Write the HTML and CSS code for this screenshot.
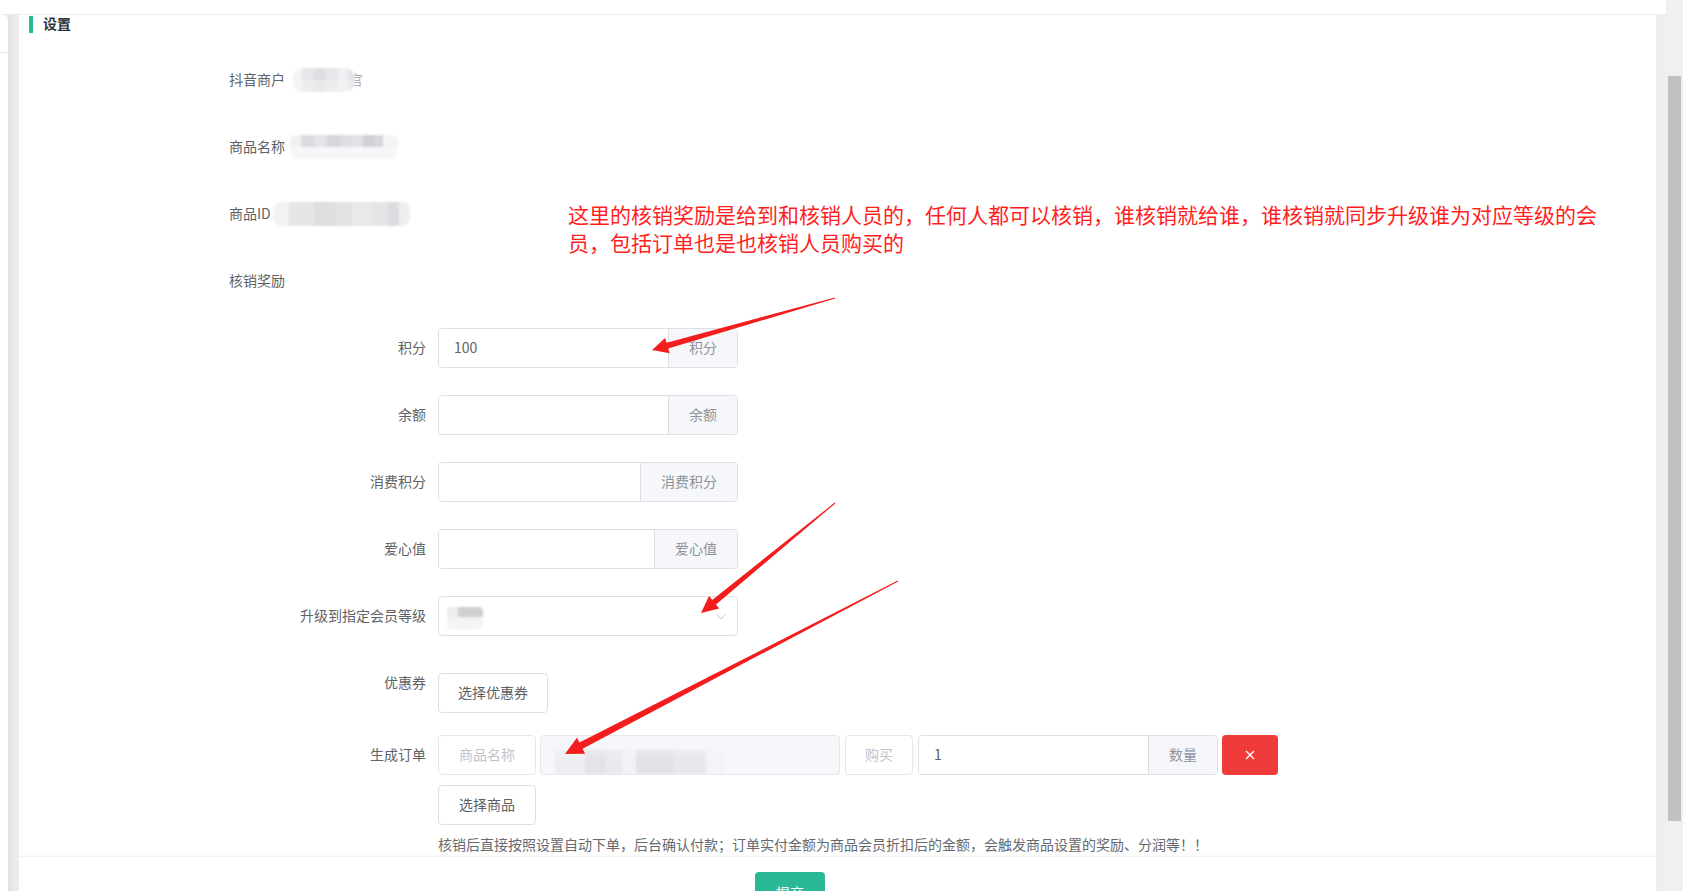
FILE: index.html
```html
<!DOCTYPE html>
<html lang="zh-CN">
<head>
<meta charset="utf-8">
<title>设置</title>
<link rel="stylesheet" href="styles.css">
</head>
<body>
<div class="app">
  <div class="main">
    <div class="topbar"></div>
    <div class="body-row">
      <div class="side"><div class="side-tab"></div></div>
      <div class="side-shadow"></div>
      <div class="panel">
        <div class="panel-head">
          <span class="head-bar"></span>
          <span class="head-title">设置</span>
        </div>
        <div class="form">
          <div class="info-row">
            <span class="info-label">抖音商户</span>
            <span class="blur blur-merchant"></span><span class="info-tail">官</span>
          </div>
          <div class="info-row">
            <span class="info-label">商品名称</span>
            <span class="blur blur-name"></span>
          </div>
          <div class="info-row">
            <span class="info-label">商品ID</span>
            <span class="blur blur-id"></span>
          </div>
          <div class="info-row">
            <span class="info-label">核销奖励</span>
          </div>

          <div class="field">
            <div class="field-label">积分</div>
            <div class="ig">
              <div class="ig-input">100</div>
              <div class="ig-append">积分</div>
            </div>
          </div>
          <div class="field">
            <div class="field-label">余额</div>
            <div class="ig">
              <div class="ig-input"></div>
              <div class="ig-append">余额</div>
            </div>
          </div>
          <div class="field">
            <div class="field-label">消费积分</div>
            <div class="ig">
              <div class="ig-input"></div>
              <div class="ig-append">消费积分</div>
            </div>
          </div>
          <div class="field">
            <div class="field-label">爱心值</div>
            <div class="ig">
              <div class="ig-input"></div>
              <div class="ig-append">爱心值</div>
            </div>
          </div>
          <div class="field">
            <div class="field-label">升级到指定会员等级</div>
            <div class="select">
              <span class="blur blur-level"></span>
              <svg class="chevron" width="10" height="6" viewBox="0 0 10 6"><path d="M0.5 0.5 L5 5 L9.5 0.5" fill="none" stroke="#c0c4cc" stroke-width="1"/></svg>
            </div>
          </div>
          <div class="field field-coupon">
            <div class="field-label">优惠券</div>
            <div class="field-content">
              <div class="btn">选择优惠券</div>
            </div>
          </div>
          <div class="field field-order">
            <div class="field-label">生成订单</div>
            <div class="order-content">
              <div class="order-line">
                <div class="tag-box tag-name">商品名称</div>
                <div class="disabled-box"><span class="blur blur-goods"></span></div>
                <div class="tag-box tag-buy">购买</div>
                <div class="ig ig-qty">
                  <div class="ig-input">1</div>
                  <div class="ig-append">数量</div>
                </div>
                <div class="btn-danger">
                  <svg width="10" height="10" viewBox="0 0 10 10"><path d="M1 1 L9 9 M9 1 L1 9" stroke="#fff" stroke-width="1.4" fill="none"/></svg>
                </div>
              </div>
              <div class="btn btn-goods">选择商品</div>
              <div class="hint">核销后直接按照设置自动下单，后台确认付款；订单实付金额为商品会员折扣后的金额，会触发商品设置的奖励、分润等！！</div>
            </div>
          </div>
        </div>
      </div>
      <div class="right-gap"></div>
    </div>
  </div>
  <div class="scrollbar"><div class="thumb"></div></div>

  <div class="footer">
    <div class="btn-submit">提交</div>
  </div>

  <div class="annotation">这里的核销奖励是给到和核销人员的，任何人都可以核销，谁核销就给谁，谁核销就同步升级谁为对应等级的会<br>员，包括订单也是也核销人员购买的</div>

  <svg class="arrows" width="1683" height="891" viewBox="0 0 1683 891">
    <polygon fill="#f31d1d" points="834.9,297.5 666.6,342.7 665.2,337.9 652,350 669.6,353.3 668.2,348.5 835.1,298.5"/>
    <polygon fill="#f31d1d" points="834.7,502.6 712.2,599.9 709.0,596.0 701,613 719.2,608.4 716.0,604.5 835.3,503.4"/>
    <polygon fill="#f31d1d" points="897.8,580.6 579.4,742.6 576.9,737.7 565,754 585.1,753.7 582.6,748.8 898.2,581.4"/>
  </svg>
</div>
</body>
</html>
```

FILE: styles.css
```css
html, body {
  margin: 0;
  padding: 0;
}
body {
  font-family: "Noto Sans CJK SC", "Liberation Sans", sans-serif;
  font-size: 14px;
  color: #606266;
}
.app {
  position: relative;
  display: flex;
  width: 1683px;
  height: 891px;
  overflow: hidden;
  background: #eeeeee;
}
.main {
  width: 1666px;
  display: flex;
  flex-direction: column;
}
.topbar {
  height: 14px;
  background: #ffffff;
  border-bottom: 1px solid #ededed;
  flex: none;
}
.body-row {
  flex: 1;
  display: flex;
}
.side {
  width: 8px;
  background: #ffffff;
  border-top-right-radius: 6px;
}
.side-tab {
  height: 37px;
  border-bottom: 1px solid #e6e6e6;
}
.side-shadow {
  width: 11px;
  background: linear-gradient(to right, #e2e2e2, #eeeeee);
}
.panel {
  width: 1637px;
  background: #ffffff;
}
.right-gap {
  flex: 1;
  background: #eeeeee;
}
.panel-head {
  display: flex;
  align-items: center;
  height: 18px;
  padding-left: 10px;
}
.head-bar {
  width: 4px;
  height: 17px;
  background: #2bb897;
}
.head-title {
  margin-left: 10px;
  font-size: 14px;
  font-weight: bold;
  color: #303133;
  line-height: 16px;
  padding-bottom: 2px;
}
.form {
  padding-left: 210px;
  margin-top: 27px;
}
.info-row {
  display: flex;
  align-items: center;
  height: 40px;
  margin-bottom: 27px;
}
.info-label {
  color: #606266;
  line-height: 18px;
  padding-bottom: 2px;
}
.info-tail {
  color: #b0b0b4;
  margin-left: -6px;
  line-height: 18px;
  padding-bottom: 2px;
}
.blur {
  display: inline-block;
  filter: blur(1.2px);
  border-radius: 10px;
}
.blur-merchant {
  margin-left: 8px;
  width: 62px;
  height: 24px;
  background:
    linear-gradient(180deg, rgba(255,255,255,0) 50%, rgba(245,245,247,0.5) 50%),
    linear-gradient(90deg, #f3f3f5 0 14%, #e6e6ea 14% 34%, #dedee2 34% 52%, #e6e6ea 52% 72%, #efeff2 72% 88%, #e2e2e6 88% 100%);
}
.blur-name {
  margin-left: 5px;
  width: 108px;
  height: 24px;
  border-radius: 6px;
  background:
    linear-gradient(180deg, rgba(255,255,255,0) 0 50%, #f7f7f9 50% 100%),
    linear-gradient(90deg, #f0f0f2 0 10%, #dcdce0 10% 22%, #e4e4e8 22% 34%, #d6d6da 34% 46%, #dfdfe3 46% 58%, #e0e3e7 58% 68%, #d2d0d6 68% 78%, #d8d6da 78% 86%, #f4f4f6 86% 100%);
}
.blur-id {
  margin-left: 2px;
  width: 137px;
  height: 24px;
  border-radius: 8px;
  background:
    linear-gradient(90deg, #f2f2f4 0 12%, #e6e6e9 12% 30%, #dedee1 30% 45%, #e2e2e5 45% 58%, #e9e9ec 58% 72%, #e4e4e7 72% 84%, #dcdce0 84% 92%, #eeeef0 92% 100%);
}
.field {
  display: flex;
  margin-bottom: 27px;
}
.field-label {
  width: 197px;
  margin-right: 12px;
  text-align: right;
  line-height: 38px;
  padding-bottom: 2px;
  color: #606266;
  flex: none;
}
.ig {
  display: flex;
  width: 300px;
  height: 40px;
  box-sizing: border-box;
  border: 1px solid #dcdfe6;
  border-radius: 4px;
  overflow: hidden;
  flex: none;
}
.ig-input {
  flex: 1;
  padding: 0 15px;
  line-height: 36px;
  padding-bottom: 2px;
  color: #606266;
  background: #ffffff;
}
.ig-append {
  padding: 0 20px 2px;
  line-height: 36px;
  background: #f5f7fa;
  border-left: 1px solid #dcdfe6;
  color: #909399;
}
.select {
  position: relative;
  display: flex;
  align-items: center;
  justify-content: space-between;
  width: 300px;
  height: 40px;
  box-sizing: border-box;
  border: 1px solid #dcdfe6;
  border-radius: 4px;
  padding: 0 11px 0 8px;
}
.blur-level {
  width: 36px;
  height: 22px;
  margin-top: 4px;
  border-radius: 4px;
  background:
    linear-gradient(180deg, rgba(255,255,255,0) 0 45%, #f4f4f5 45% 100%),
    linear-gradient(90deg, #efedee 0 30%, #cfcfd1 30% 100%);
}
.chevron {
  display: block;
  margin-top: 2px;
}
.field-coupon {
  margin-bottom: 22px;
}
.field-content {
  padding-top: 10px;
}
.btn {
  display: inline-block;
  height: 40px;
  box-sizing: border-box;
  padding: 0 19px 2px;
  line-height: 36px;
  border: 1px solid #dcdfe6;
  border-radius: 4px;
  background: #ffffff;
  color: #606266;
  white-space: nowrap;
}
.order-content {
  display: flex;
  flex-direction: column;
  align-items: flex-start;
}
.order-line {
  display: flex;
  align-items: center;
  height: 40px;
}
.tag-box {
  height: 40px;
  box-sizing: border-box;
  padding: 0 0 2px;
  text-align: center;
  line-height: 36px;
  border: 1px solid #e4e7ed;
  border-radius: 4px;
  background: #ffffff;
  color: #c0c4cc;
  white-space: nowrap;
  flex: none;
}
.tag-name {
  width: 98px;
}
.disabled-box {
  display: flex;
  align-items: center;
  width: 300px;
  height: 40px;
  box-sizing: border-box;
  margin-left: 4px;
  border: 1px solid #e4e7ed;
  border-radius: 4px;
  background: #f5f7fa;
  overflow: hidden;
  flex: none;
}
.blur-goods {
  margin-left: 14px;
  margin-top: 14px;
  width: 168px;
  height: 24px;
  border-radius: 2px;
  background:
    linear-gradient(180deg, rgba(245,247,250,0.2) 0 30%, rgba(255,255,255,0) 30%),
    linear-gradient(90deg, #eceef2 0 18%, #e2e4e8 18% 30%, #e8eaee 30% 40%, #f0f2f5 40% 48%, #e0e2e6 48% 70%, #e6e8ec 70% 90%, #f2f4f7 90% 100%);
}
.tag-buy {
  width: 68px;
  margin-left: 5px;
}
.ig-qty {
  margin-left: 5px;
}
.btn-danger {
  display: flex;
  align-items: center;
  justify-content: center;
  width: 56px;
  height: 40px;
  margin-left: 4px;
  border-radius: 4px;
  background: #f03b3b;
  flex: none;
}
.btn-goods {
  margin-top: 10px;
  width: 98px;
  text-align: center;
  padding: 0 0 2px;
}
.hint {
  margin-top: 10px;
  line-height: 18px;
  color: #666a70;
  white-space: nowrap;
}
.scrollbar {
  width: 17px;
  background: #f0f0f0;
  padding-top: 76px;
  box-sizing: border-box;
  flex: none;
}
.thumb {
  width: 13px;
  height: 745px;
  margin-left: 2px;
  background: #c1c1c1;
}
.footer {
  position: absolute;
  left: 19px;
  top: 856px;
  width: 1637px;
  height: 35px;
  background: #ffffff;
  border-top: 1px solid #f3f3f3;
  box-shadow: 0 -2px 4px rgba(0, 0, 0, 0.02);
  box-sizing: border-box;
  padding: 15px 0 0 736px;
}
.btn-submit {
  width: 70px;
  height: 40px;
  border-radius: 4px;
  background: #2bb897;
  color: #ffffff;
  text-align: center;
  line-height: 40px;
}
.annotation {
  position: absolute;
  left: 568px;
  top: 200px;
  font-size: 21px;
  line-height: 28px;
  color: #ff1f1f;
  white-space: nowrap;
}
.arrows {
  position: absolute;
  left: 0;
  top: 0;
  pointer-events: none;
}
```
